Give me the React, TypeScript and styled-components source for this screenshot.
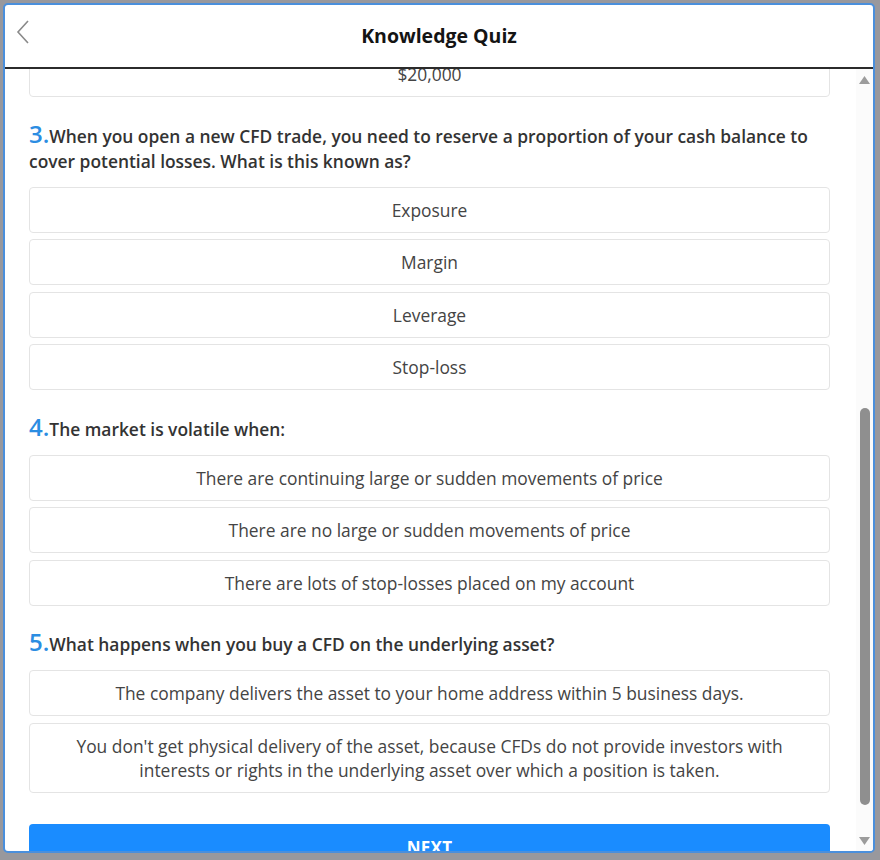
import * as React from 'react'
import styled, {createGlobalStyle} from 'styled-components'

const GlobalStyle = createGlobalStyle({
	'html, body': {
		margin: 0,
		height: '100%',
		background: '#98989d',
		fontFamily: '"Open Sans", "Noto Sans", sans-serif',
	},
	'#root': {
		height: '100%',
	},
})

const Page = styled('div')({
	boxSizing: 'border-box',
	height: '100vh',
	padding: '3px 5px 7px 3px',
})

const Modal = styled('div')({
	boxSizing: 'border-box',
	height: '100%',
	display: 'flex',
	flexDirection: 'column',
	background: '#fff',
	border: '2px solid #4a8fdc',
	borderRadius: 5,
	overflow: 'hidden',
})

const Header = styled('header')({
	flex: 'none',
	height: 62,
	display: 'grid',
	gridTemplateColumns: '60px 1fr 60px',
	alignItems: 'center',
	borderBottom: '2px solid #2b2b2b',
})

const BackButton = styled('button')({
	justifySelf: 'start',
	marginLeft: 10,
	marginTop: -8,
	padding: 0,
	border: 0,
	background: 'none',
	display: 'flex',
	cursor: 'pointer',
})

const Title = styled('h1')({
	margin: '-2px 0 0',
	textAlign: 'center',
	fontSize: 19.5,
	fontWeight: 700,
	color: '#141414',
})

const Body = styled('div')({
	flex: 1,
	minHeight: 0,
	display: 'flex',
})

const Content = styled('div')({
	flex: 1,
	minWidth: 0,
	overflow: 'hidden',
	padding: '0 26px 0 24px',
})

// content is scrolled down, so the previous answer sits half under the header
const Scrolled = styled('div')({
	marginTop: -18,
})

const Question = styled('p')({
	margin: '26.5px 0 13px',
	fontSize: 17.4,
	fontWeight: 600,
	lineHeight: '25px',
	color: '#333',
})

const Num = styled('span')({
	fontSize: 24,
	fontWeight: 600,
	lineHeight: 0,
	color: '#2b8de2',
})

const Option = styled('button')({
	display: 'block',
	width: '100%',
	boxSizing: 'border-box',
	marginBottom: 6.5,
	padding: '10px 16px',
	border: '1px solid #e4e4e4',
	borderRadius: 4,
	background: '#fff',
	fontFamily: 'inherit',
	fontSize: 17.4,
	lineHeight: '24px',
	color: '#444',
	textAlign: 'center',
	cursor: 'pointer',
})

const NextButton = styled('button')({
	display: 'block',
	width: '100%',
	height: 48,
	marginTop: 31,
	border: 0,
	borderRadius: 4,
	background: '#1a8cff',
	color: '#fff',
	fontFamily: 'inherit',
	fontSize: 17,
	fontWeight: 700,
	letterSpacing: 0.3,
	cursor: 'pointer',
})

const Scrollbar = styled('div')({
	flex: 'none',
	width: 17,
	display: 'flex',
	flexDirection: 'column',
	alignItems: 'center',
	background: '#fbfbfb',
})

const Arrow = styled('div')<{$h: number}>(({$h}) => ({
	flex: 'none',
	height: $h,
	display: 'flex',
	alignItems: 'center',
	justifyContent: 'center',
}))

const Track = styled('div')({
	flex: 1,
	width: 10,
})

const Thumb = styled('div')({
	width: 10,
	borderRadius: 5,
	background: '#8f8f8f',
})

type Q = {n: number, text: string, options: string[]}

const questions: Q[] = [
	{
		n: 3,
		text: 'When you open a new CFD trade, you need to reserve a proportion of your cash balance to cover potential losses. What is this known as?',
		options: ['Exposure', 'Margin', 'Leverage', 'Stop-loss'],
	},
	{
		n: 4,
		text: 'The market is volatile when:',
		options: [
			'There are continuing large or sudden movements of price',
			'There are no large or sudden movements of price',
			'There are lots of stop-losses placed on my account',
		],
	},
	{
		n: 5,
		text: 'What happens when you buy a CFD on the underlying asset?',
		options: [
			'The company delivers the asset to your home address within 5 business days.',
			"You don't get physical delivery of the asset, because CFDs do not provide investors with interests or rights in the underlying asset over which a position is taken.",
		],
	},
]

const thumb = {top: 317, height: 397}

export default function App() {
	return (
		<>
			<GlobalStyle />
			<Page>
				<Modal>
					<Header>
						<BackButton aria-label="Back">
							<svg width="16" height="26" viewBox="0 0 16 26">
								<polyline points="13,2 3,13 13,24" fill="none" stroke="#8a8a8a" strokeWidth="1.6" />
							</svg>
						</BackButton>
						<Title>Knowledge Quiz</Title>
						<span />
					</Header>
					<Body>
						<Content>
							<Scrolled>
								<Option>$20,000</Option>
								{questions.map(q => (
									<div key={q.n}>
										<Question><Num>{q.n}.</Num>{q.text}</Question>
										{q.options.map(o => <Option key={o}>{o}</Option>)}
									</div>
								))}
								<NextButton>NEXT</NextButton>
							</Scrolled>
						</Content>
						<Scrollbar>
							<Arrow $h={22}>
								<svg width="11" height="8" viewBox="0 0 11 8"><polygon points="5.5,0 11,8 0,8" fill="#9c9c9c" /></svg>
							</Arrow>
							<Track>
								<Thumb style={{marginTop: thumb.top, height: thumb.height}} />
							</Track>
							<Arrow $h={20}>
								<svg width="11" height="8" viewBox="0 0 11 8"><polygon points="0,0 11,0 5.5,8" fill="#9c9c9c" /></svg>
							</Arrow>
						</Scrollbar>
					</Body>
				</Modal>
			</Page>
		</>
	)
}
